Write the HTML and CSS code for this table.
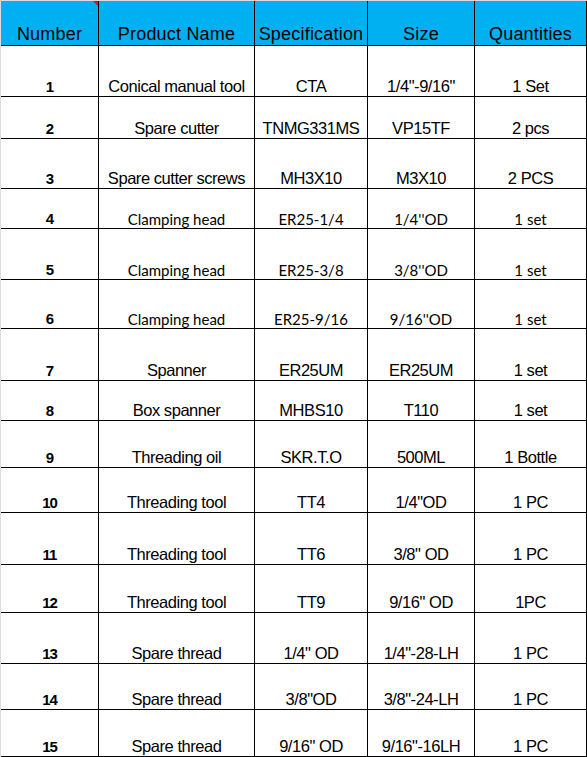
FILE: index.html
```html
<!DOCTYPE html>
<html>
<head>
<meta charset="utf-8">
<link rel="stylesheet" href="styles.css">
</head>
<body>
<div class="frame">
<table class="sheet">
<colgroup>
<col class="c-num"><col class="c-name"><col class="c-spec"><col class="c-size"><col class="c-qty">
</colgroup>
<thead>
<tr class="r45">
<th class="note">Number<span class="flag"></span></th>
<th>Product Name</th>
<th>Specification</th>
<th>Size</th>
<th>Quantities</th>
</tr>
</thead>
<tbody>
<tr class="r51"><td class="num">1</td><td>Conical manual tool</td><td>CTA</td><td>1/4"-9/16"</td><td>1 Set</td></tr>
<tr class="r42"><td class="num">2</td><td>Spare cutter</td><td>TNMG331MS</td><td>VP15TF</td><td>2 pcs</td></tr>
<tr class="r50"><td class="num">3</td><td>Spare cutter screws</td><td>MH3X10</td><td>M3X10</td><td>2 PCS</td></tr>
<tr class="r40 cal"><td class="num">4</td><td>Clamping head</td><td>ER25-1/4</td><td>1/4''OD</td><td>1 set</td></tr>
<tr class="r51 cal"><td class="num">5</td><td>Clamping head</td><td>ER25-3/8</td><td>3/8''OD</td><td>1 set</td></tr>
<tr class="r49 cal"><td class="num">6</td><td>Clamping head</td><td>ER25-9/16</td><td>9/16''OD</td><td>1 set</td></tr>
<tr class="r52"><td class="num">7</td><td>Spanner</td><td>ER25UM</td><td>ER25UM</td><td>1 set</td></tr>
<tr class="r40"><td class="num">8</td><td>Box spanner</td><td>MHBS10</td><td>T110</td><td>1 set</td></tr>
<tr class="r47"><td class="num">9</td><td>Threading oil</td><td>SKR.T.O</td><td>500ML</td><td>1 Bottle</td></tr>
<tr class="r45"><td class="num">10</td><td>Threading tool</td><td>TT4</td><td>1/4"OD</td><td>1 PC</td></tr>
<tr class="r52"><td class="num">11</td><td>Threading tool</td><td>TT6</td><td>3/8" OD</td><td>1 PC</td></tr>
<tr class="r48"><td class="num">12</td><td>Threading tool</td><td>TT9</td><td>9/16" OD</td><td>1PC</td></tr>
<tr class="r51"><td class="num">13</td><td>Spare thread</td><td>1/4" OD</td><td>1/4"-28-LH</td><td>1 PC</td></tr>
<tr class="r46"><td class="num">14</td><td>Spare thread</td><td>3/8"OD</td><td>3/8"-24-LH</td><td>1 PC</td></tr>
<tr class="r47"><td class="num">15</td><td>Spare thread</td><td>9/16" OD</td><td>9/16"-16LH</td><td>1 PC</td></tr>
</tbody>
</table>
</div>
</body>
</html>
```
FILE: styles.css
```css
html, body {
  margin: 0;
  padding: 0;
  background: #ffffff;
}

.frame {
  width: 587px;
  height: 757px;
  box-sizing: border-box;
  padding: 1px 0 0 1px;
  background: #dcdcdc;
  overflow: hidden;
}

.sheet {
  table-layout: fixed;
  border-collapse: separate;
  border-spacing: 0;
  width: 586px;
  background: #ffffff;
  font-family: "Liberation Sans", Arial, sans-serif;
  color: #000000;
}

.c-num { width: 98px; }
.c-name { width: 156px; }
.c-spec { width: 113px; }
.c-size { width: 107px; }
.c-qty { width: 112px; }

.sheet th,
.sheet td {
  box-sizing: border-box;
  border-right: 1px solid #000000;
  border-bottom: 1px solid #000000;
  padding: 0;
  text-align: center;
  vertical-align: bottom;
  white-space: nowrap;
  overflow: hidden;
  line-height: normal;
}

.sheet th {
  background: #00b0f0;
  font-weight: normal;
  font-size: 18px;
  letter-spacing: 0.2px;
}

.sheet td {
  font-size: 16.5px;
  letter-spacing: -0.45px;
}

.sheet td.num {
  font-weight: bold;
  font-size: 15px;
  letter-spacing: -1px;
  padding-bottom: 1px;
}

.sheet tr.cal td {
  font-family: Lato, "Liberation Sans", sans-serif;
  font-size: 15px;
  letter-spacing: 0;
}

.sheet tr.cal td.num {
  font-family: "Liberation Sans", Arial, sans-serif;
  font-size: 15px;
  letter-spacing: -1px;
}

.note {
  position: relative;
}

.flag {
  position: absolute;
  top: 0;
  right: 0;
  width: 0;
  height: 0;
  border-top: 5px solid #ff0000;
  border-left: 5px solid transparent;
}

.r40 td { height: 40px; }
.r42 td { height: 42px; }
.r45 th, .r45 td { height: 45px; }
.r46 td { height: 46px; }
.r47 td { height: 47px; }
.r48 td { height: 48px; }
.r49 td { height: 49px; }
.r50 td { height: 50px; }
.r51 td { height: 51px; }
.r52 td { height: 52px; }
```
